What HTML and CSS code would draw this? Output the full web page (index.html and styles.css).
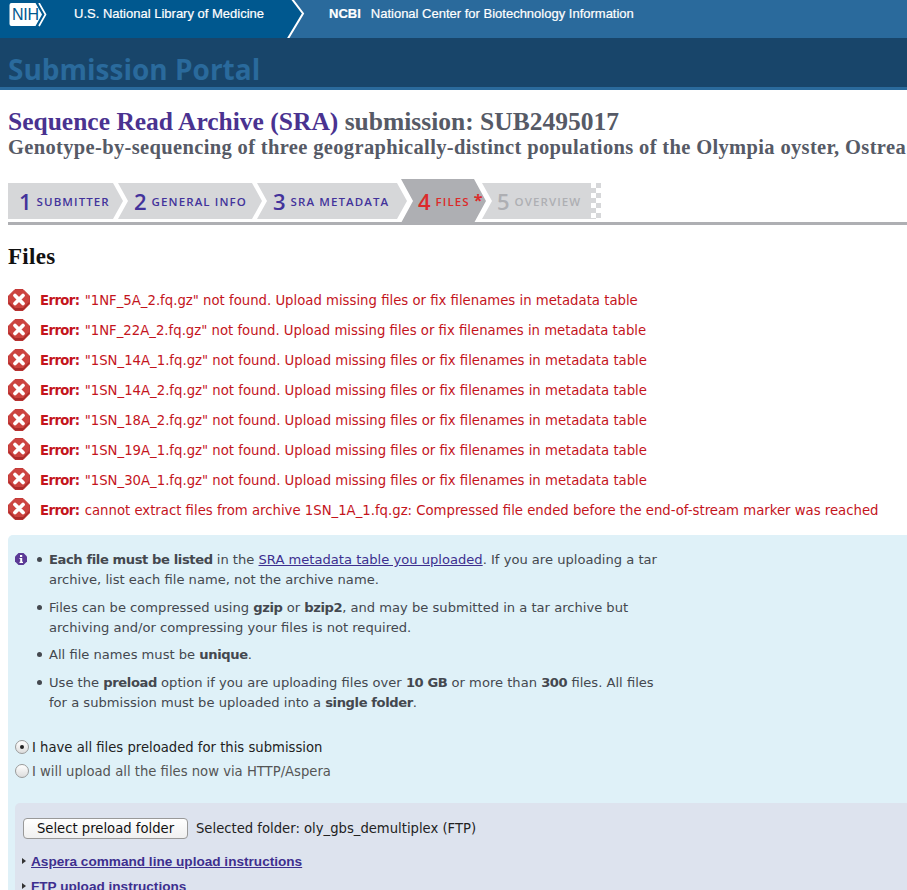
FILE: index.html
```html
<!DOCTYPE html>
<html lang="en">
<head>
<meta charset="utf-8">
<title>Submission Portal</title>
<link rel="stylesheet" href="styles.css">
</head>
<body>
<svg class="defs" width="0" height="0" aria-hidden="true">
  <symbol id="err" viewBox="0 0 22 22">
    <path d="M7 0.500h8l6.500 6.500v8l-6.500 6.500h-8l-6.500-6.500v-8z" fill="#cc4440" stroke="#c43a38" stroke-width="1" stroke-linejoin="round"/>
    <path d="M1 15l6 6.500h8l6-6.500v-2l-6 6h-8l-6-6z" fill="#a92b2a"/>
    <path d="M7 6.500l8 8M15 6.500l-8 8" stroke="#fff" stroke-width="3.800" stroke-linecap="round"/>
  </symbol>
</svg>
<header class="top">
  <div class="nlm">
    <svg class="nih" width="38" height="24" viewBox="0 0 38 24">
      <path d="M2.500 0H26.500L33 11.500 26.500 23H2.500A2 2 0 0 1 .5 21V2A2 2 0 0 1 2.500 0z" fill="#fff"/>
      <path d="M30 0L36.500 11.500 30 23" fill="none" stroke="#fff" stroke-width="1.700"/>
      <text x="3" y="17" class="nihtext">NIH</text>
    </svg>
    <span class="nlmname">U.S. National Library of Medicine</span>
    <svg class="chev" width="22" height="38" viewBox="0 0 22 38"><path d="M0 0H7L18 13.500 3 38H0z" fill="#00588f"/><path d="M7 -1L18 13.500 3 38.500" fill="none" stroke="#fff" stroke-width="2"/></svg>
  </div>
  <div class="ncbi"><b>NCBI</b><span>National Center for Biotechnology Information</span></div>
</header>
<div class="band"><div class="portal">Submission Portal</div></div>
<main class="page">
  <h1 class="title"><span class="t1">Sequence Read Archive (SRA)</span> submission: SUB2495017</h1>
  <h2 class="sub">Genotype-by-sequencing of three geographically-distinct populations of the Olympia oyster, Ostrea lurida</h2>
  <nav class="steps">
    <div class="step s1"><i>1</i><span>SUBMITTER</span></div>
    <div class="step s2"><i>2</i><span>GENERAL INFO</span></div>
    <div class="step s3"><i>3</i><span>SRA METADATA</span></div>
    <div class="step s4"><i>4</i><span>FILES <em>*</em></span></div>
    <div class="step s5"><i>5</i><span>OVERVIEW</span></div>
    <div class="checks"></div>
  </nav>
  <h3 class="files">Files</h3>
  <ul class="errors">
    <li><svg><use href="#err"/></svg><p><b>Error:</b> "1NF_5A_2.fq.gz" not found. Upload missing files or fix filenames in metadata table</p></li>
    <li><svg><use href="#err"/></svg><p><b>Error:</b> "1NF_22A_2.fq.gz" not found. Upload missing files or fix filenames in metadata table</p></li>
    <li><svg><use href="#err"/></svg><p><b>Error:</b> "1SN_14A_1.fq.gz" not found. Upload missing files or fix filenames in metadata table</p></li>
    <li><svg><use href="#err"/></svg><p><b>Error:</b> "1SN_14A_2.fq.gz" not found. Upload missing files or fix filenames in metadata table</p></li>
    <li><svg><use href="#err"/></svg><p><b>Error:</b> "1SN_18A_2.fq.gz" not found. Upload missing files or fix filenames in metadata table</p></li>
    <li><svg><use href="#err"/></svg><p><b>Error:</b> "1SN_19A_1.fq.gz" not found. Upload missing files or fix filenames in metadata table</p></li>
    <li><svg><use href="#err"/></svg><p><b>Error:</b> "1SN_30A_1.fq.gz" not found. Upload missing files or fix filenames in metadata table</p></li>
    <li><svg><use href="#err"/></svg><p><b>Error:</b> cannot extract files from archive 1SN_1A_1.fq.gz: Compressed file ended before the end-of-stream marker was reached</p></li>
  </ul>
  <section class="info">
    <div class="notes">
      <svg class="infoicon" width="12" height="12" viewBox="0 0 12 12"><path d="M3.500 0h5L12 3.500v5L8.500 12h-5L0 8.500v-5z" fill="#5b3a96"/><rect x="5" y="2" width="2.200" height="2" fill="#fff"/><path d="M4.500 5H7.200v3.800H8V10H4.500V8.800H5.200V6.100H4.500z" fill="#fff"/></svg>
      <ul class="bullets">
        <li><b>Each file must be listed</b> in the <a href="#">SRA metadata table you uploaded</a>. If you are uploading a tar archive, list each file name, not the archive name.</li>
        <li>Files can be compressed using <b>gzip</b> or <b>bzip2</b>, and may be submitted in a tar archive but archiving and/or compressing your files is not required.</li>
        <li>All file names must be <b>unique</b>.</li>
        <li>Use the <b>preload</b> option if you are uploading files over <b>10 GB</b> or more than <b>300</b> files. All files for a submission must be uploaded into a <b>single folder</b>.</li>
      </ul>
    </div>
    <div class="radios">
      <label class="radio on"><span class="dot"></span>I have all files preloaded for this submission</label>
      <label class="radio"><span class="dot"></span>I will upload all the files now via HTTP/Aspera</label>
    </div>
    <div class="preload">
      <div class="selrow"><button class="btn" type="button">Select preload folder</button><span>Selected folder: oly_gbs_demultiplex (FTP)</span></div>
      <div class="tri"><a href="#">Aspera command line upload instructions</a></div>
      <div class="tri"><a href="#">FTP upload instructions</a></div>
    </div>
  </section>
</main>
</body>
</html>
```
FILE: styles.css
```css
* { box-sizing: border-box; }
html, body { margin: 0; padding: 0; height: 890px; overflow: hidden; background: #fff; }
body { font-family: "DejaVu Sans", sans-serif; width: 907px; }
.defs { position: absolute; }

.top { display: flex; height: 38px; background: #2a6a9c; color: #fff; font-family: "Liberation Sans", sans-serif; font-size: 13px; }
.nlm { display: flex; align-items: flex-start; width: 286px; background: #00588f; position: relative; padding: 3px 0 0 9px; }
.nih { display: block; flex: none; }
.nihtext { font: 400 16px "Liberation Sans", sans-serif; fill: #00588f; letter-spacing: -.3px; }
.nlmname { margin: 3px 0 0 27px; white-space: nowrap; -webkit-text-stroke: .2px #fff; }
.chev { position: absolute; top: 0; left: 285px; }
.ncbi { display: flex; gap: 10px; margin: 6px 0 0 43px; white-space: nowrap; -webkit-text-stroke: .2px #fff; }
.ncbi b { font-weight: 700; }

.band { height: 52px; background: #18456a; border-bottom: 3px solid #2a6a9c; padding: 14px 0 0 8px; }
.portal { font: 700 28px/34px "Open Sans", sans-serif; color: #2a6a9c; white-space: nowrap; }

.page { padding: 18px 0 0 8px; width: 1100px; }
.title { margin: 0; font: 700 25.500px/28px "Liberation Serif", serif; color: #565a66; white-space: nowrap; }
.t1 { color: #4a3290; }
.sub { margin: 0; font: 700 20.500px/22px "Liberation Serif", serif; letter-spacing: .35px; color: #565a66; white-space: nowrap; }

.steps { display: flex; margin-top: 21px; width: 899px; height: 46px; border-bottom: 3px solid #aeafb3; align-items: flex-start; padding-top: 4px; position: relative; }
.step { height: 36px; background: #d6d7d9; display: flex; align-items: center; color: #43339b; white-space: nowrap; margin-left: -5px; flex: none; }
.step i { font: 600 22px "Open Sans", sans-serif; margin-right: 5px; }
.step span { font: 600 11.500px "Open Sans", sans-serif; letter-spacing: 1.100px; }
.s1 { width: 115px; margin-left: 0; padding-left: 11px; clip-path: polygon(0 0, 105px 0, 115px 50%, 105px 100%, 0 100%); }
.s2 { width: 144px; padding-left: 16px; clip-path: polygon(0 0, 134px 0, 144px 50%, 134px 100%, 0 100%, 10px 50%); }
.s3 { width: 150px; padding-left: 16px; clip-path: polygon(0 0, 140px 0, 150px 50%, 140px 100%, 0 100%, 10px 50%); }
.s4 { width: 85px; height: 44px; margin-top: -4px; margin-left: -6px; background: #aeafb3; color: #dc2a2a; padding-left: 17px; clip-path: polygon(0 0, 73px 0, 85px 50%, 73px 100%, 0 100%, 12px 50%); }
.s4 em { font: 700 16px/10px "Open Sans", sans-serif; }
.s5 { width: 109px; margin-left: -4px; padding-left: 15px; color: #aeafb3; clip-path: polygon(0 0, 100% 0, 100% 100%, 0 100%, 10px 50%); }
.checks { width: 10px; height: 36px; flex: none; background: conic-gradient(#d6d7d9 25%, #fff 0 50%, #d6d7d9 0 75%, #fff 0) 0 0 / 10px 10px; }

.files { margin: 18px 0 0; font: 700 23px/28px "Liberation Serif", serif; letter-spacing: .3px; color: #111; }
.errors { list-style: none; margin: 15px 0 0; padding: 0; }
.errors li { display: flex; align-items: center; height: 29.900px; color: #c4141c; font-size: 13.250px; white-space: nowrap; }
.errors svg { width: 22px; height: 22px; flex: none; margin-right: 10px; margin-top: -2px; }
.errors p { margin: 0; }
.errors b { letter-spacing: -.6px; margin-right: 1px; }

.info { width: 1000px; height: 400px; margin-top: 10px; background: #dff1f8; border-radius: 5px; padding: 15px 0 0 7px; font-size: 13.200px; color: #3a3f46; }
.notes { display: flex; width: 655px; }
.infoicon { flex: none; margin-top: 3px; }
.bullets { margin: 0; padding: 0 0 0 22px; list-style: none; line-height: 20px; flex: 1; font-size: 13.100px; color: #44484f; }
.bullets li { margin-bottom: 7.500px; position: relative; }
.bullets li::before { content: ""; position: absolute; left: -12px; top: 7px; width: 5px; height: 5px; border-radius: 50%; background: #44484f; }
.bullets b { font-weight: 700; letter-spacing: -.4px; }
.bullets a { color: #3d2f8f; }
.radios { margin-top: 17px; display: flex; flex-direction: column; gap: 4px; }
.radio { display: flex; align-items: center; height: 20px; color: #222; }
.radio + .radio { color: #555; }
.dot { width: 14px; height: 14px; border: 1px solid #9a9a9a; border-radius: 50%; background: linear-gradient(#fff, #ddd); margin-right: 3px; flex: none; position: relative; }
.on .dot::after { content: ""; position: absolute; left: 4px; top: 4px; width: 4px; height: 4px; background: #222; border-radius: 50%; }
.preload { margin-top: 22px; height: 200px; background: #dde3ee; border-radius: 5px; padding: 15px 0 0 8px; color: #222; }
.selrow { display: flex; align-items: center; gap: 8px; }
.btn { width: 165px; height: 21px; padding: 0; background: linear-gradient(#fff, #f0f0f0); border: 1px solid #999; border-radius: 4px; font: 13.200px "DejaVu Sans", sans-serif; color: #111; }
.tri { position: relative; padding-left: 8px; margin-top: 8px; font: 700 13.600px/17px "Liberation Sans", sans-serif; }
.selrow + .tri { margin-top: 14px; }
.tri a { color: #3d2f8f; }
.tri::before { content: ""; position: absolute; left: -1px; top: 5px; border: 3.500px solid transparent; border-left: 4px solid #333; border-right: 0; }
```
